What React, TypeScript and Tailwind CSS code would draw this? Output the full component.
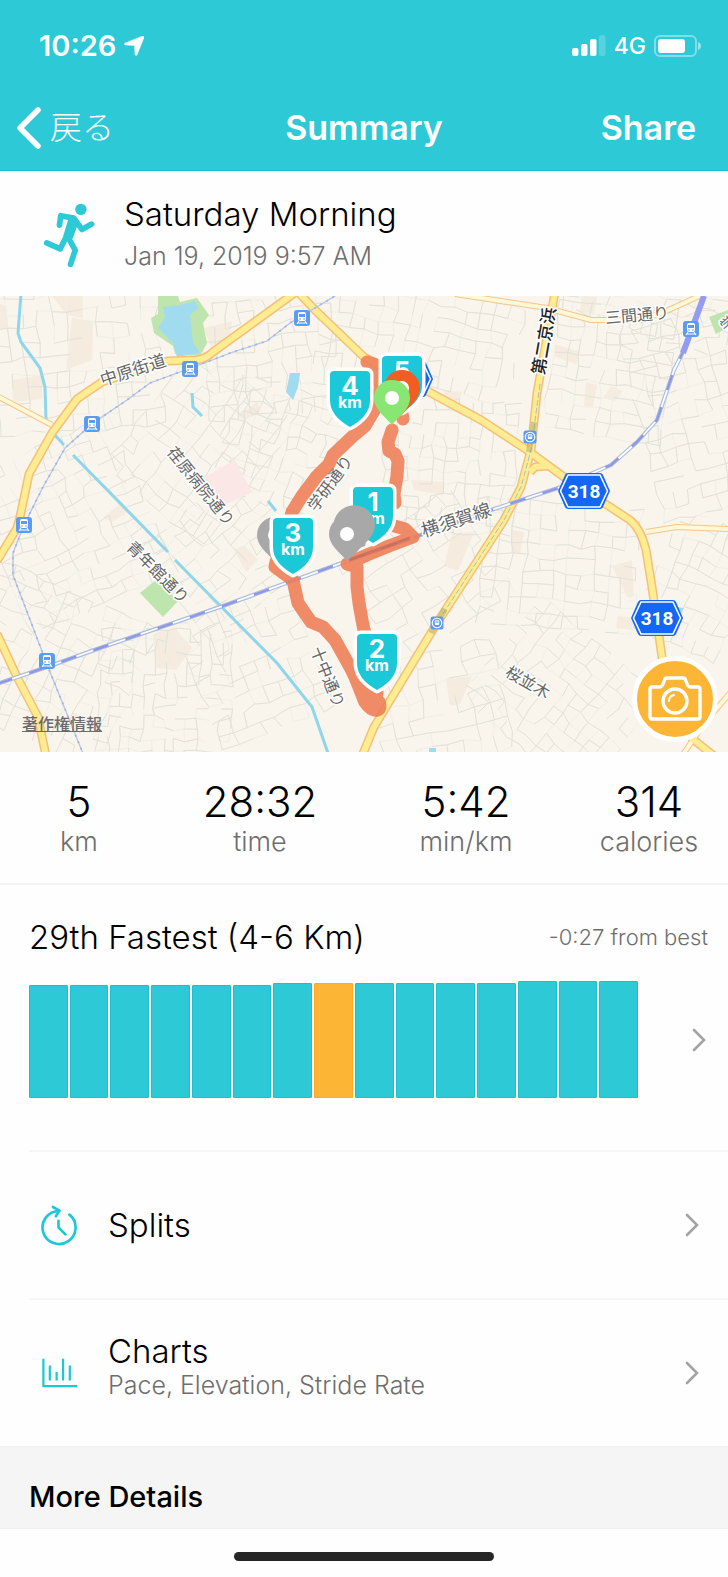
import { ReactNode } from 'react';

const BARS = [113, 113, 113, 113, 113, 113, 115, 115, 115, 115, 115, 115, 117, 117, 117];
const CURRENT_RUN = 7;

const STATS = [
  { value: '5', label: 'km' },
  { value: '28:32', label: 'time' },
  { value: '5:42', label: 'min/km' },
  { value: '314', label: 'calories' },
];

// Street grids: one wobbly lattice per district
const DISTRICTS = [
  { x: 62, y: 60, w: 190, h: 150, angle: -4, step: 15 },
  { x: 70, y: 230, w: 160, h: 170, angle: -24, step: 13 },
  { x: 50, y: 370, w: 170, h: 160, angle: 24, step: 14 },
  { x: 165, y: 400, w: 130, h: 130, angle: 2, step: 11 },
  { x: 200, y: 150, w: 130, h: 150, angle: 38, step: 14 },
  { x: 270, y: 60, w: 130, h: 120, angle: -6, step: 13 },
  { x: 280, y: 150, w: 110, h: 120, angle: 16, step: 12 },
  { x: 225, y: 260, w: 120, h: 130, angle: 50, step: 13 },
  { x: 255, y: 370, w: 120, h: 130, angle: -22, step: 15 },
  { x: 420, y: 40, w: 190, h: 100, angle: 12, step: 14 },
  { x: 450, y: 170, w: 130, h: 130, angle: 3, step: 12 },
  { x: 425, y: 280, w: 130, h: 120, angle: -32, step: 15 },
  { x: 610, y: 75, w: 120, h: 130, angle: 8, step: 13 },
  { x: 690, y: 120, w: 100, h: 190, angle: -14, step: 14 },
  { x: 560, y: 270, w: 150, h: 130, angle: 5, step: 14 },
  { x: 560, y: 400, w: 160, h: 130, angle: 40, step: 13 },
  { x: 440, y: 410, w: 120, h: 110, angle: -12, step: 16 },
  { x: 700, y: 290, w: 90, h: 130, angle: 24, step: 13 },
  { x: 650, y: 10, w: 170, h: 50, angle: 18, step: 14 },
];

function noise(n: number) {
  const v = Math.sin(n * 12.9898) * 43758.5453;
  return v - Math.floor(v);
}

function streets(keep: number, seed: number) {
  let d = '';
  DISTRICTS.forEach((t, k) => {
    const a = (t.angle * Math.PI) / 180;
    const cols = Math.round(t.w / t.step);
    const rows = Math.round(t.h / t.step);
    const point = (i: number, j: number) => {
      const id = k * 977 + i * 31 + j * 7;
      const u = (i - cols / 2) * t.step + (noise(id) - 0.5) * 5;
      const v = (j - rows / 2) * t.step + (noise(id + 3.3) - 0.5) * 5;
      const x = t.x + u * Math.cos(a) - v * Math.sin(a);
      const y = t.y + u * Math.sin(a) + v * Math.cos(a);
      return x.toFixed(1) + ' ' + y.toFixed(1);
    };
    for (let i = 0; i <= cols; i++) {
      for (let j = 0; j <= rows; j++) {
        const id = k * 577 + i * 17 + j * 41 + seed;
        if (i < cols && noise(id) < keep) d += `M${point(i, j)}L${point(i + 1, j)}`;
        if (j < rows && noise(id + 9.1) < keep) d += `M${point(i, j)}L${point(i, j + 1)}`;
      }
    }
  });
  return d;
}

const STREETS = streets(0.5, 5);
const LANES = streets(0.4, 77);

const MAIN_ROADS = [
  'M296 -4L213 56Q206 63 196 64L168 65L102 86L77 103L52 137L29 178L20 221L17 232L-3 265',
  'M-3 338L17 381L38 421L46 460',
  'M298 -4L315 14L364 61L431 97L481 124L527 154L564 181L630 224Q641 233 646 254L652 291L662 361Q668 422 694 444L714 460',
  'M555 -4L537 97L531 154L521 191L504 224L437 327L374 431L362 460',
  'M530 176L535 171L548 170',
];

const MINOR_ROADS = [
  'M455 -2L547 12L591 24L641 24L664 16L706 -3',
  'M-3 100L52 129',
  'M646 236L677 231L731 233',
  'M682 460L705 426L731 396',
];

const RIVERS = [
  'M21 -2L18 37L21 46L40 72L45 91L46 124',
  'M53 137L64 149',
  'M73 159L168 256',
  'M175 264L277 367L312 411L329 460',
  'M192 97L193 111L202 120',
  'M268 205L276 215',
];

const RAIL = 'M-3 388L47 371L100 352L220 311L364 259L491 214L561 191L611 169L637 146L657 124L674 74L684 54L705 -3';
const LOCAL_LINE =
  'M340 -3L290 27L267 45L233 56L207 66L150 87L127 104L93 127L65 152L43 191L24 229L13 257L13 279L48 371L84 460';

const LABELS = [
  { text: '中原街道', x: 133, y: 74, angle: -18, size: 17 },
  { text: '荏原病院通り', x: 201, y: 190, angle: 51, size: 16 },
  { text: '学研通り', x: 330, y: 187, angle: -54, size: 16 },
  { text: '青年館通り', x: 158, y: 276, angle: 45, size: 16 },
  { text: '十中通り', x: 328, y: 381, angle: 68, size: 16 },
  { text: '三間通り', x: 637, y: 19, angle: -5, size: 16 },
  { text: '横須賀線', x: 456, y: 224, angle: -18, size: 18 },
  { text: '桜並木', x: 528, y: 386, angle: 30, size: 16 },
  { text: '学', x: 727, y: 27, angle: -40, size: 14 },
];

const STATIONS = [
  [302, 22],
  [190, 73],
  [92, 128],
  [24, 229],
  [47, 365],
  [691, 33],
];

const ROUTE =
  'M367 66L376 69L380 92L375 113L365 130L353 140L333 159L329 168L317 180L302 200L292 216L286 240L276 266L275 271L293 284L298 307L311 326L323 331L335 344L350 371L363 396L374 412L377 397L370 350L364 334L362 324L359 307L357 291L357 271L347 268L367 259L389 250L413 241L405 233L391 229M395 207L394 198L397 180L398 165L395 158L389 155L388 146L392 134M402 117L403 123';

function Station({ x, y }: { x: number; y: number }) {
  return (
    <g transform={`translate(${x} ${y})`}>
      <rect x="-8" y="-8" width="16" height="16" rx="3" fill="#5c9cf0" />
      <rect x="-4" y="-6" width="8" height="9" rx="2" fill="#fff" />
      <rect x="-3" y="-4" width="6" height="3" fill="#5c9cf0" />
      <circle cx="-2" cy="1" r="0.8" fill="#5c9cf0" />
      <circle cx="2" cy="1" r="0.8" fill="#5c9cf0" />
      <path d="M-3 3L-5 6M3 3L5 6M-4 5H4" stroke="#fff" strokeWidth="1.1" />
    </g>
  );
}

function Subway({ x, y }: { x: number; y: number }) {
  return (
    <g transform={`translate(${x} ${y})`}>
      <rect x="-6.5" y="-6.5" width="13" height="13" rx="2.5" fill="#5c9cf0" />
      <circle r="4.8" fill="none" stroke="#fff" strokeWidth="1.1" />
      <rect x="-2.2" y="-2.7" width="4.4" height="4.7" rx="1" fill="#fff" />
      <path d="M-1.5 -1H1.5" stroke="#5c9cf0" strokeWidth="1.2" />
    </g>
  );
}

function RouteBadge({ x, y, number }: { x: number; y: number; number?: number }) {
  return (
    <g transform={`translate(${x} ${y})`}>
      <path d="M-16 -18H16Q18 -18 19 -16L26 0L19 16Q18 18 16 18H-16Q-18 18 -19 16L-26 0L-19 -16Q-18 -18 -16 -18Z" fill="#1467f5" />
      <path d="M-16 -16H16L23.5 0L16 16H-16L-23.5 0Z" fill="none" stroke="#fff" strokeWidth="1.6" strokeLinejoin="round" />
      {number && (
        <text y="7" textAnchor="middle" className="font-['Roboto',sans-serif] text-[19px] font-bold" fill="#fff">
          {number}
        </text>
      )}
    </g>
  );
}

function KmMarker({ x, y, km }: { x: number; y: number; km: number }) {
  return (
    <g transform={`translate(${x} ${y})`}>
      <path
        d="M-16 0H16Q20 0 20 4V29Q20 45 0 56Q-20 45 -20 29V4Q-20 0 -16 0Z"
        fill="#1bc8d8"
        stroke="#fff"
        strokeWidth="7"
        strokeLinejoin="round"
        paintOrder="stroke"
      />
      <text y="24" textAnchor="middle" className="text-[26px] font-bold" fill="#fff">
        {km}
      </text>
      <text y="37" textAnchor="middle" className="text-[16px] font-bold" fill="#fff">
        km
      </text>
    </g>
  );
}

function Pin({ x, y, color }: { x: number; y: number; color: string }) {
  return (
    <g transform={`translate(${x} ${y})`}>
      <path d="M0 27C-5 20 -18 12 -18 0A18 18 0 0 1 18 0C18 12 5 20 0 27Z" fill={color} />
      <circle r="7" fill="#fff" />
    </g>
  );
}

function RunMap() {
  return (
    <svg viewBox="0 0 728 456" className="block w-full h-auto" role="img" aria-label="Route map">
      <rect width="728" height="456" fill="#f9f4ec" />
      <g fill="#f5ecdf">
        <path d="M52 0H82L83 22L67 19Z" />
        <path d="M72 22L93 25L92 64L66 74Z" />
        <path d="M204 32L232 25L230 46L212 54Z" />
        <path d="M12 84L42 79V103L14 106Z" />
        <path d="M0 8L6 10L8 32L0 34Z" />
        <path d="M237 118L258 106L260 118L243 124Z" />
        <path d="M103 222L122 206L128 216L112 226Z" />
        <path d="M153 338L174 331L192 352L176 374L157 372Z" />
        <path d="M234 254L244 249L258 264L246 276Z" />
        <path d="M411 184L445 186L443 199L414 194Z" />
        <path d="M555 48L580 56L576 68L554 60Z" />
        <path d="M586 86L597 89L593 111L584 110Z" />
        <path d="M611 90L623 95L615 105L603 102Z" />
        <path d="M452 238L474 236L458 275L444 270Z" />
        <path d="M512 234L524 236L520 258L511 256Z" />
        <path d="M446 383L472 380L460 408L450 410Z" />
        <path d="M618 320L634 322L632 334L616 332Z" />
        <path d="M612 270L632 264L634 300L628 302Z" />
        <path d="M582 0L597 1L594 18L580 16Z" />
        <path d="M444 94L462 96L459 108L443 104Z" />
      </g>
      <path d={LANES} fill="none" stroke="#eff0e8" strokeWidth="1" />
      <path d={STREETS} fill="none" stroke="#e2e2d9" strokeWidth="1" />
      <path d="M203 182L235 164L252 196L225 209Z" fill="#fbe8e6" />
      <g fill="#bfe5ae">
        <path d="M158 0H178L180 6L197 2L209 19L203 27L207 47L200 60L175 58L173 50L154 37L151 22L158 18Z" />
        <path d="M156 284L178 305L163 321L140 297Z" />
        <path d="M709 21L728 14V31L716 38Z" />
      </g>
      <g fill="#a0dbf0">
        <path d="M163 11L180 9L195 5L198 12L190 19L193 47L200 57L177 61L173 47L158 32L165 22Z" />
        <path d="M290 77H300L298 91L293 104L286 96Z" />
        <path d="M429 452H436V456H429Z" />
        <path d="M676 311L684 312L680 318Z" />
      </g>
      <g fill="none" stroke="#8fd6ec" strokeWidth="3">
        {RIVERS.map(d => (
          <path key={d} d={d} />
        ))}
      </g>
      <g fill="none" strokeLinejoin="round">
        {MINOR_ROADS.map(d => (
          <path key={d} d={d} stroke="#f3c690" strokeWidth="6" />
        ))}
        {MAIN_ROADS.map(d => (
          <path key={d} d={d} stroke="#f4c078" strokeWidth="9" />
        ))}
        {MINOR_ROADS.map(d => (
          <path key={d} d={d} stroke="#fff8d4" strokeWidth="4" />
        ))}
        {MAIN_ROADS.map(d => (
          <path key={d} d={d} stroke="#fdec92" strokeWidth="6" />
        ))}
        <path d="M540 88L531 154L521 191L504 224L437 327" stroke="#a9bfc0" strokeWidth="1" strokeDasharray="6 2" />
        <path d={LOCAL_LINE} stroke="#b4c5e6" strokeWidth="1.3" />
        <path d={LOCAL_LINE} stroke="#a3b8e0" strokeWidth="1.8" strokeDasharray="2 5" />
        <path d={RAIL} stroke="#a9bcdf" strokeWidth="4" />
        <path d={RAIL} stroke="#fff" strokeWidth="1.8" />
        <path d={RAIL} stroke="#8f97e3" strokeWidth="2.4" strokeDasharray="16 18" />
        <path d="M683 57L704 0" stroke="#939cf0" strokeWidth="6" />
        <path d="M534 126L529 156M445 313L431 337" stroke="#a0a060" strokeOpacity="0.45" strokeWidth="6" />
      </g>
      {STATIONS.map(([x, y]) => (
        <Station key={x} x={x} y={y} />
      ))}
      <Subway x={530} y={141} />
      <Subway x={437} y={327} />
      <g
        textAnchor="middle"
        dominantBaseline="central"
        className="font-normal"
        stroke="#fff"
        strokeWidth="3"
        strokeLinejoin="round"
        paintOrder="stroke"
      >
        {LABELS.map(l => (
          <text key={l.text} transform={`translate(${l.x} ${l.y}) rotate(${l.angle})`} fontSize={l.size} fill="#666">
            {l.text}
          </text>
        ))}
        <text transform="translate(544 45) rotate(-80)" fontSize="17" fontWeight="500" fill="#222">
          第二京浜
        </text>
      </g>
      <RouteBadge x={584} y={195} number={318} />
      <RouteBadge x={657} y={322} number={318} />
      <RouteBadge x={407} y={83} />
      <g opacity="0.88">
        <path d={ROUTE} fill="none" stroke="#ef7d56" strokeWidth="13" strokeLinecap="round" strokeLinejoin="round" />
        <path d="M344 371L360 372L385 403Q390 418 377 421Q367 421 359 409Z" fill="#ef7d56" />
      </g>
      <path d="M349 264L410 242" stroke="#a85a55" strokeOpacity="0.45" strokeWidth="3" />
      <Pin x={275} y={239} color="#a8a8a8" />
      <KmMarker x={293} y={222} km={3} />
      <KmMarker x={350} y={75} km={4} />
      <KmMarker x={377} y={338} km={2} />
      <KmMarker x={373} y={191} km={1} />
      <KmMarker x={402} y={60} km={5} />
      <path d="M347 265L357 211A18 18 0 0 1 375 229C375 241 362 249 357 256Z" fill="#a8a8a8" />
      <path d="M334 225A21 21 0 0 1 372 219L365 250L350 255Z" fill="#a8a8a8" />
      <Pin x={347} y={238} color="#a8a8a8" />
      <Pin x={402} y={92} color="#f25d22" />
      <Pin x={392} y={102} color="#88e673" />
    </svg>
  );
}

function Chevron() {
  return (
    <svg viewBox="0 0 14 24" className="w-[14px] h-6 shrink-0" fill="none" stroke="#a3a3a3" strokeWidth="2.6" strokeLinecap="round">
      <path d="M2 2L12 12L2 22" />
    </svg>
  );
}

function DetailRow({ icon, title, subtitle }: { icon: ReactNode; title: string; subtitle?: string }) {
  return (
    <button type="button" className="ml-[29px] h-[148px] flex items-center border-t-2 border-[#f6f6f6] pl-[11px] pr-[29px] text-left">
      <span className="w-10 shrink-0">{icon}</span>
      <span className={subtitle ? 'flex-1 flex flex-col pl-7 pb-3' : 'flex-1 flex flex-col pl-7'}>
        <span className="text-[33px] leading-9">{title}</span>
        {subtitle && <span className="text-[25px] leading-8 text-[#6e6e6e]">{subtitle}</span>}
      </span>
      <Chevron />
    </button>
  );
}

export default function App() {
  return (
    <main className="flex flex-col min-h-screen bg-[#fefefe] text-black font-light font-['Inter','Noto_Sans_CJK_JP',sans-serif]">
      <header className="bg-[#2dc9d7] border-b border-[#1bbfce] text-white">
        <div className="h-[86px] pt-[6px] pl-[39px] pr-[26px] flex items-center justify-between">
          <div className="flex items-center gap-2">
            <time className="text-[29px] leading-9 font-semibold">10:26</time>
            <svg viewBox="0 0 20 20" className="w-5 h-5" fill="currentColor">
              <path d="M18.3 0.2Q20.4 -0.3 19.9 1.8L13.2 18.500Q12 20.8 11 18.5L10.6 10.4Q10.6 9.4 9.600 9.4L1.3 9Q-0.8 8.2 1.2 7Z" stroke="currentColor" strokeWidth="0.5" />
            </svg>
          </div>
          <div className="flex items-center gap-2">
            <svg viewBox="0 0 34 22" className="w-[34px] h-[22px]" fill="currentColor">
              <rect x="0" y="13" width="6.500" height="8" rx="2" />
              <rect x="9" y="9" width="6.500" height="12" rx="2" />
              <rect x="18" y="4" width="6.500" height="17" rx="2" />
              <rect x="27" y="0" width="6.500" height="21" rx="2" opacity="0.2" />
            </svg>
            <span className="text-[23px] leading-7 font-medium">4G</span>
            <svg viewBox="0 0 48 24" className="w-12 h-6" fill="currentColor">
              <rect x="1" y="2" width="41" height="20" rx="5" fill="none" stroke="currentColor" strokeWidth="2" opacity="0.4" />
              <rect x="4" y="5" width="27" height="14" rx="3" />
              <path d="M44 8Q47 9 47 12Q47 15 44 16Z" opacity="0.5" />
            </svg>
          </div>
        </div>
        <nav className="h-[84px] px-4 grid grid-cols-[1fr_auto_1fr] items-center">
          <button type="button" className="flex items-center gap-2 justify-self-start">
            <svg viewBox="0 0 26 42" className="w-[26px] h-[42px]" fill="none" stroke="currentColor" strokeWidth="5.5" strokeLinecap="round" strokeLinejoin="round">
              <path d="M22 3L4 21L22 39" />
            </svg>
            <span className="text-[32px] leading-10">戻る</span>
          </button>
          <h1 className="text-[34px] leading-10 font-semibold">Summary</h1>
          <button type="button" className="justify-self-end pr-4 text-[34px] leading-10 font-semibold">
            Share
          </button>
        </nav>
      </header>

      <section className="h-[125px] pt-1 pl-11 flex items-center gap-[29px]">
        <svg viewBox="132 549 152 194" className="w-[51px] h-[65px]" fill="none" stroke="#2dc9d7" strokeWidth="17" strokeLinecap="round" strokeLinejoin="round">
          <circle cx="242" cy="568" r="17" fill="#2dc9d7" stroke="none" />
          <path d="M178 615L182 587L221 594L245 628L274 612" />
          <path d="M203 640L180 686L140 668M203 650L225 690L211 732" />
          <path d="M205 595L236 603L218 655L189 648Z" fill="#2dc9d7" stroke="none" />
        </svg>
        <div>
          <h2 className="text-[33px] leading-10">Saturday Morning</h2>
          <p className="text-[25px] leading-[44px] text-[#6e6e6e]">Jan 19, 2019 9:57 AM</p>
        </div>
      </section>

      <section className="relative">
        <RunMap />
        <a href="#legal" className="absolute left-[22px] bottom-4 text-[16px] leading-6 font-medium text-[#6b6b6b] underline">
          著作権情報
        </a>
        <button
          type="button"
          aria-label="Add photo"
          className="absolute right-[10px] bottom-[10px] size-[86px] rounded-full border-[5px] border-white bg-[#fdb535] flex items-center justify-center"
        >
          <svg viewBox="0 0 54 46" className="w-[54px] h-[46px]" fill="none" stroke="#fff" strokeWidth="3.4" strokeLinejoin="round" strokeLinecap="round">
            <path d="M4 11H11Q14 11 15 8L16.500 4Q17 2 19 2H35Q37 2 37.500 4L39 8Q40 11 43 11H50Q52 11 52 13V41Q52 43 50 43H4Q2 43 2 41V13Q2 11 4 11Z" />
            <circle cx="27" cy="25" r="12" />
            <path d="M21 25Q21 20 26 19" strokeWidth="2" />
          </svg>
        </button>
      </section>

      <dl className="h-[133px] pt-[26px] grid grid-cols-[79fr_102fr_104fr_79fr] border-b-2 border-[#f4f4f4] text-center">
        {STATS.map(s => (
          <div key={s.label} className="flex flex-col-reverse justify-end">
            <dt className="text-[27px] leading-8 text-[#6e6e6e]">{s.label}</dt>
            <dd className="text-[42px] leading-[48px]">{s.value}</dd>
          </div>
        ))}
      </dl>

      <section className="h-[265px] pt-8">
        <div className="flex items-center justify-between pl-[29px] pr-5">
          <h2 className="text-[33px] leading-10">29th Fastest (4-6 Km)</h2>
          <p className="text-[22px] leading-10 text-[#6e6e6e]">-0:27 from best</p>
        </div>
        <button type="button" aria-label="Compare runs" className="w-full pt-6 pl-[29px] pr-[22px] flex items-center gap-[54px]">
          <span className="flex-1 flex items-end gap-[2px] h-[117px]">
            {BARS.map((h, i) => (
              <span
                key={i}
                className={
                  i === CURRENT_RUN
                    ? 'flex-1 rounded-[1px] border border-[#fda924] bg-[#fdb535]'
                    : 'flex-1 rounded-[1px] border border-[#16c2d2] bg-[#2dc9d7]'
                }
                style={{ height: h }}
              />
            ))}
          </span>
          <Chevron />
        </button>
      </section>

      <DetailRow
        title="Splits"
        icon={
          <svg viewBox="60 44 112 124" className="w-[37px] h-[41px]" fill="none" stroke="#1bc8d8" strokeWidth="8" strokeLinecap="round" strokeLinejoin="round">
            <path d="M149 73A50 50 0 1 1 118 62" />
            <path d="M99 50L119 61L108 78M116 92V112L137 133" />
          </svg>
        }
      />
      <DetailRow
        title="Charts"
        subtitle="Pace, Elevation, Stride Rate"
        icon={
          <svg viewBox="63 504 118 88" className="w-10 h-[30px]" fill="none" stroke="#1bc8d8" strokeWidth="6.500">
            <path d="M73 506V587H173M92 526V570M112 545V570M131 506V570M151 526V570" />
          </svg>
        }
      />

      <section className="h-[83px] pt-[30px] pl-[29px] bg-[#f5f5f5] border-y border-[#efefef]">
        <h2 className="text-[29px] leading-10 font-medium">More Details</h2>
      </section>

      <footer className="h-12 pt-[6px] flex items-center justify-center">
        <div className="w-[260px] h-[9px] rounded-full bg-[#262626]" />
      </footer>
    </main>
  );
}
